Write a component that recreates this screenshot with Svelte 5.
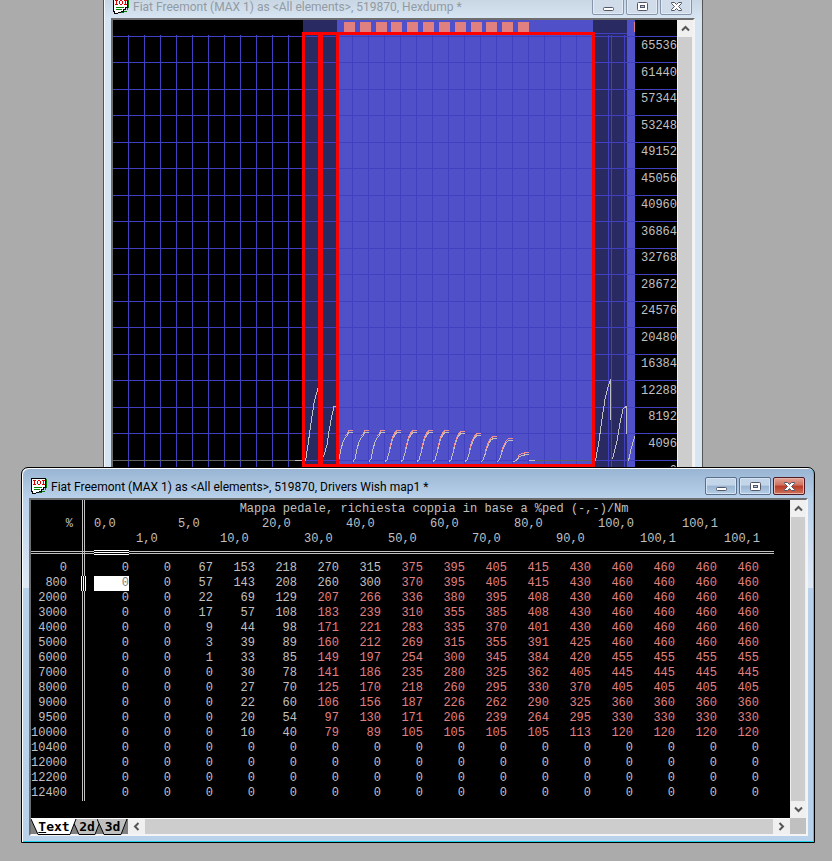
<script>
  const columns = ['0,0', '1,0', '5,0', '10,0', '20,0', '30,0', '40,0', '50,0', '60,0', '70,0', '80,0', '90,0', '100,0', '100,1', '100,1', '100,1'];

  const rows = [
    { rpm: 0, red: 7, v: [0, 0, 67, 153, 218, 270, 315, 375, 395, 405, 415, 430, 460, 460, 460, 460] },
    { rpm: 800, red: 7, v: [0, 0, 57, 143, 208, 260, 300, 370, 395, 405, 415, 430, 460, 460, 460, 460] },
    { rpm: 2000, red: 5, v: [0, 0, 22, 69, 129, 207, 266, 336, 380, 395, 408, 430, 460, 460, 460, 460] },
    { rpm: 3000, red: 5, v: [0, 0, 17, 57, 108, 183, 239, 310, 355, 385, 408, 430, 460, 460, 460, 460] },
    { rpm: 4000, red: 5, v: [0, 0, 9, 44, 98, 171, 221, 283, 335, 370, 401, 430, 460, 460, 460, 460] },
    { rpm: 5000, red: 5, v: [0, 0, 3, 39, 89, 160, 212, 269, 315, 355, 391, 425, 460, 460, 460, 460] },
    { rpm: 6000, red: 5, v: [0, 0, 1, 33, 85, 149, 197, 254, 300, 345, 384, 420, 455, 455, 455, 455] },
    { rpm: 7000, red: 5, v: [0, 0, 0, 30, 78, 141, 186, 235, 280, 325, 362, 405, 445, 445, 445, 445] },
    { rpm: 8000, red: 5, v: [0, 0, 0, 27, 70, 125, 170, 218, 260, 295, 330, 370, 405, 405, 405, 405] },
    { rpm: 9000, red: 5, v: [0, 0, 0, 22, 60, 106, 156, 187, 226, 262, 290, 325, 360, 360, 360, 360] },
    { rpm: 9500, red: 5, v: [0, 0, 0, 20, 54, 97, 130, 171, 206, 239, 264, 295, 330, 330, 330, 330] },
    { rpm: 10000, red: 5, v: [0, 0, 0, 10, 40, 79, 89, 105, 105, 105, 105, 113, 120, 120, 120, 120] },
    ...[10400, 12000, 12200, 12400].map((rpm) => ({ rpm, red: 99, v: Array(16).fill(0) }))
  ];

  const scale = Array.from({ length: 17 }, (_, i) => 65536 - i * 4096);
  const gridX = Array.from({ length: 32 }, (_, i) => 15 + i * 16);
  const gridY = Array.from({ length: 17 }, (_, i) => Math.floor(16 + i * 26.5));
  const marks = Array.from({ length: 12 }, (_, i) => Math.round(231 + i * 15.82));

  // One rising curve per table row; the value is the plateau height on the chart.
  const tops = [412, 412, 412, 412, 412, 412, 412, 413, 415, 418, 420, 434];
  const curves = tops.map((top, i) => {
    const x = 224 + i * 16;
    const h = 441 - top;
    const points =
      i === 11
        ? [[0, 0], [3, 0.1], [5, 0.45], [7, 0.75], [11, 0.85], [12, 1], [16, 1]]
        : i < 3
          ? [[0, 0], [2, 0.08], [4, 0.42], [6, 0.68], [8, 0.82], [10, 0.88], [12, 1], [16, 1]]
          : [[0, 0], [2, 0.06], [4, 0.3], [6, 0.58], [8, 0.8], [10, 0.93], [12, 1], [16, 1]];
    const line = (dy, from) =>
      points
        .slice(from)
        .map(([px, py]) => `${x + px},${441.5 - py * h + dy}`)
        .join(' ');
    return { light: line(0, i === 0 ? 1 : 0), red: line(-2, i < 3 ? 4 : 2) };
  });

  let tab = $state('Text');
</script>

{#snippet appIcon()}
  <svg class="app-icon" width="16" height="16" viewBox="0 0 16 16" shape-rendering="crispEdges" aria-hidden="true">
    <path d="M14 1h2v9h-1v2h-1v2h-3v1H2v-2h12z" fill="#008000" />
    <path d="M0 0h15v10h-2v2h-2v2H8v1H5v1H1v-2H0z" fill="#000" />
    <path d="M1 1h13v8h-2v2h-2v2H8v1H5v1H2v-2H1z" fill="#fff" />
    <path d="M2 2h3v1H4v3h1v1H2V6h1V3H2zM7 2h2v1H7zM6 3h1v3H6zM9 3h1v3H9zM7 6h2v1H7zM11 2h3v1h-1v3h1v1h-3V6h1V3h-1z" fill="#e00000" />
    <path d="M3 9h8v1H3zM3 11h6v1H3z" fill="#008000" />
  </svg>
{/snippet}

{#snippet titleBar(text)}
  <header class="title">
    {@render appIcon()}
    <h2>{text}</h2>
    <div class="caption-buttons">
      <button type="button" aria-label="Minimize">
        <svg width="13" height="11" viewBox="0 0 13 11"><rect x="1.5" y="6.5" width="10" height="3" rx="1" fill="#fff" stroke="#535666" /></svg>
      </button>
      <button type="button" aria-label="Maximize">
        <svg width="13" height="11" viewBox="0 0 13 11"><rect x="1.5" y="1.5" width="10" height="8" rx="1" fill="#fff" stroke="#535666" /><rect x="4.5" y="4.5" width="4" height="2" fill="#b8cde4" stroke="#535666" /></svg>
      </button>
      <button type="button" class="close" aria-label="Close">
        <svg width="13" height="11" viewBox="0 0 13 11"><path d="M1.5 1.5h3l2 2 2-2h3v1l-3 3 3 3v1h-3l-2-2-2 2h-3v-1l3-3-3-3z" fill="#fff" stroke="#535666" /></svg>
      </button>
    </div>
  </header>
{/snippet}

{#snippet arrow(dir)}
  <button type="button" class="arrow {dir}" aria-label="Scroll {dir}">
    <svg width="9" height="9" viewBox="0 0 9 9"><path d="M1 6.5L4.5 3L8 6.5" fill="none" stroke="#555" stroke-width="2" /></svg>
  </button>
{/snippet}

<main class="desktop">
  <section class="window back">
    {@render titleBar('Fiat Freemont (MAX 1) as <All elements>, 519870, Hexdump *')}
    <div class="client">
      <div class="hexdump">
        <svg class="plot" width="564" height="470" viewBox="0 0 564 470" shape-rendering="crispEdges" role="img" aria-label="Hexdump values">
          <rect x="190" width="34" height="470" fill="#2a2a62" />
          <rect x="224" width="256" height="470" fill="#5050c8" />
          <rect x="480" width="34" height="470" fill="#2a2a62" />
          <rect x="514" width="8" height="470" fill="#5050c8" />
          {#each marks as x}<rect {x} y="2" width="11" height="10" fill="#e08080" />{/each}
          <rect x="521" y="2" width="1" height="10" fill="#e08080" />
          <g fill="#4040c0">
            {#each gridX as x}<rect {x} y="15" width="1" height="455" />{/each}
            {#each gridY as y}<rect x="0" {y} width="564" height="1" />{/each}
            <rect x="480" y="13" width="34" height="1" />
            <rect x="498" y="15" width="1" height="455" />
            <rect x="511" y="15" width="1" height="455" />
          </g>
          <g fill="none" stroke="#c0c0c0">
            <path d="M0 440.5H182M421 440.5H480" stroke="#606060" />
            <path d="M182 440.5H190M416 440.5H422" />
            <path d="M192.500 441L195 425L198 403L201 383L203 375L205.500 367M210.500 437L214 425L216 411L219 395L221 386.500H224" />
            <path d="M482.500 441L486 421L489 399L492 379L495 367L497.500 359.500M497.500 359V400M499.500 439L504 421L507 403L510 389L513 386.500M513.500 386V414M515.500 441L518 429L522 416" />
            {#each curves as c}<polyline points={c.light} />{/each}
          </g>
          <g fill="none" stroke="#f09090">
            {#each curves as c}<polyline points={c.red} />{/each}
          </g>
          <g fill="none" stroke="#f00" stroke-width="3">
            <rect x="190.5" y="13.5" width="16" height="432" />
            <rect x="208.500" y="13.5" width="16" height="432" />
            <rect x="224.500" y="13.5" width="256" height="432" />
          </g>
        </svg>
        <ol class="scale">
          {#each scale as value}<li>{value}</li>{/each}
        </ol>
      </div>
      <div class="vbar">
        {@render arrow('up')}
        <div class="track"></div>
        {@render arrow('down')}
      </div>
    </div>
  </section>

  <section class="window front">
    {@render titleBar('Fiat Freemont (MAX 1) as <All elements>, 519870, Drivers Wish map1 *')}
    <div class="client">
      <div class="sheet">
        <table>
          <colgroup>
            <col class="col-rpm" />
            <col class="col-first" />
            <col span="14" class="col-value" />
            <col class="col-last" />
          </colgroup>
          <thead>
            <tr class="map-name"><th></th><th colspan="16">Mappa pedale, richiesta coppia in base a %ped (-,-)/Nm</th></tr>
            <tr>
              <th class="unit">%</th>
              {#each columns as c, i}<th scope="col">{i % 2 ? '' : c}</th>{/each}
            </tr>
            <tr>
              <th></th>
              {#each columns as c, i}<th scope="col">{i % 2 ? c : ''}</th>{/each}
            </tr>
            <tr class="rule"><th></th><td><i></i></td><td colspan="15"></td></tr>
          </thead>
          <tbody>
            {#each rows as row, r}
              <tr class:current={r === 1}>
                <th scope="row">{row.rpm}</th>
                {#each row.v as value, c}
                  <td class:red={c >= row.red}><span class:selected={r === 1 && c === 0}>{value}</span></td>
                {/each}
              </tr>
            {/each}
          </tbody>
        </table>
      </div>
      <div class="vbar">
        {@render arrow('up')}
        <div class="track"></div>
        {@render arrow('down')}
      </div>
      <div class="footer">
        <div class="tabs">
          {#each [['Text', 46], ['2d', 30], ['3d', 31]] as [name, w]}
            <button type="button" class:active={tab === name} style:width="{w}px" onclick={() => (tab = name)}>
              <svg width={w} height="16" aria-hidden="true"><path d="M0 0L7 15.500H{w - 7}L{w - 1} 0" /></svg>
              <b>{#if name === 'Text'}<u>T</u>ext{:else}{name}{/if}</b>
            </button>
          {/each}
        </div>
        <div class="hbar">
          {@render arrow('left')}
          <div class="track"></div>
          {@render arrow('right')}
        </div>
      </div>
      <div class="corner"></div>
    </div>
  </section>
</main>

<style>
  :global(body) {
    margin: 0;
    background: #ababab;
  }
  .desktop {
    position: relative;
    height: 100vh;
    min-height: 850px;
    overflow: hidden;
    background: #ababab;
    font-family: Roboto, 'Open Sans', sans-serif;
  }
  button {
    padding: 0;
    border: 0;
    font: inherit;
  }
  .window {
    position: absolute;
    box-sizing: border-box;
    display: flex;
    flex-direction: column;
    padding: 0 6px 6px 7px;
    border: 1px solid #555;
  }
  .back {
    left: 103px;
    top: -13px;
    width: 600px;
    padding-right: 7px;
    background: linear-gradient(#bfcddb, #d7e4f2 30px);
    box-shadow: inset 1px 0 #f4f8fc;
  }
  .front {
    left: 21px;
    top: 467px;
    width: 794px;
    border-color: #000;
    border-radius: 7px 7px 0 0;
    background:
      linear-gradient(#b9d1ea, #dfe9f6) 0 30px / 100% 90px no-repeat,
      linear-gradient(#98b4d2, #b9d1ea 30px);
    box-shadow: inset 1px 1px #fff, inset -1px -1px #22d3ee;
  }
  .title {
    display: flex;
    align-items: flex-start;
    height: 30px;
  }
  .app-icon {
    flex: none;
    margin: 10px 4px 0 2px;
  }
  h2 {
    flex: 1;
    margin: 12px 0 0;
    font-size: 12px;
    font-weight: 400;
    line-height: 14px;
    white-space: nowrap;
    color: #000;
  }
  .back h2 {
    color: #929aa2;
  }
  .caption-buttons {
    display: flex;
    gap: 2px;
    margin: 9px 3px 0 0;
  }
  .caption-buttons button {
    display: flex;
    align-items: center;
    justify-content: center;
    width: 32px;
    height: 18px;
    border: 1px solid #5a6f8c;
    border-radius: 2px;
    background: linear-gradient(#c3d5e8 45%, #9ab5d2 50%, #b5cde6);
    box-shadow: inset 0 0 0 1px #d5e3f2;
  }
  .back .caption-buttons button {
    border-color: #8795ac;
    background: #d0dcea;
    box-shadow: inset 0 0 0 1px #e2ebf5;
  }
  .front .caption-buttons .close {
    border-color: #4e1a24;
    background: linear-gradient(#e3a598, #cf6f5c 45%, #b83a25 50%, #d0715a);
    box-shadow: inset 0 0 0 1px #e8b3a8;
  }
  .client {
    display: grid;
    grid-template-columns: 1fr 16px;
    border: 2px solid;
    border-color: #6e6e6e #f4f4f4 #f4f4f4 #6e6e6e;
    background: #000;
  }
  .hexdump {
    position: relative;
    display: flex;
    font-family: 'Liberation Mono', monospace;
    font-size: 12px;
    color: #c0c0c0;
  }
  .plot {
    display: block;
  }
  .scale {
    position: absolute;
    top: 13px;
    right: 0;
    width: 42px;
    height: 451px;
    margin: 0;
    padding: 0;
    display: flex;
    flex-direction: column;
    list-style: none;
    text-align: right;
  }
  .scale li {
    flex: 1;
    line-height: 26px;
  }
  .vbar,
  .hbar {
    display: flex;
    background: #f0f0f0;
  }
  .vbar {
    flex-direction: column;
    padding: 0 1px;
  }
  .track {
    flex: 1;
    background: #cdcdcd;
  }
  .arrow {
    display: flex;
    align-items: center;
    justify-content: center;
    height: 17px;
    background: #f0f0f0;
  }
  .hbar {
    flex: 1;
    border-top: 1px solid #fff;
  }
  .hbar .arrow {
    width: 17px;
    height: 15px;
  }
  .down svg {
    transform: rotate(180deg);
  }
  .left svg {
    transform: rotate(-90deg);
  }
  .right svg {
    transform: rotate(90deg);
  }
  .sheet {
    padding-bottom: 17px;
    overflow: hidden;
    font-family: 'Liberation Mono', monospace;
    font-size: 12px;
    line-height: 15px;
    color: #c0c0c0;
  }
  table {
    width: 743px;
    table-layout: fixed;
    border-spacing: 0;
    white-space: nowrap;
  }
  .col-rpm {
    width: 54px;
  }
  .col-first {
    width: 51px;
  }
  .col-value {
    width: 42px;
  }
  .col-last {
    width: 50px;
  }
  tr {
    height: 15px;
  }
  th,
  td {
    padding: 0;
    font-weight: 400;
    text-align: left;
    box-sizing: border-box;
  }
  th:first-child {
    padding-right: 16px;
    border-right: 3px double #c0c0c0;
    text-align: right;
  }
  th.unit:first-child {
    padding-right: 9px;
  }
  th:nth-child(2),
  td:nth-child(2) {
    padding-left: 9px;
  }
  /* Five-digit row labels are right-aligned against the rule and may use the left margin. */
  tbody th:first-child {
    padding-right: 15px;
  }
  td span {
    display: block;
    width: 35px;
    text-align: right;
  }
  .map-name {
    height: 17px;
  }
  .map-name th[colspan] {
    padding: 2px 0 0 9px;
    text-align: center;
  }
  .rule {
    height: 14px;
    line-height: 14px;
    background: linear-gradient(#c0c0c0, #c0c0c0) 0 4px / 100% 1px no-repeat, linear-gradient(#c0c0c0, #c0c0c0) 0 6px / 100% 1px no-repeat;
  }
  .rule td {
    position: relative;
  }
  .rule i {
    position: absolute;
    left: 9px;
    top: 3px;
    width: 35px;
    height: 5px;
    background: repeating-linear-gradient(#fff 0 1px, #000 1px 2px);
  }
  .selected {
    background: #fff;
    color: #808080;
  }
  .current th {
    position: relative;
  }
  .current th::after {
    content: '';
    position: absolute;
    top: 0;
    right: -4px;
    width: 5px;
    height: 15px;
    background: repeating-linear-gradient(90deg, #fff 0 1px, #000 1px 2px);
  }
  .red {
    color: #e08080;
  }
  .footer {
    display: flex;
    height: 16px;
    background: #808080;
  }
  .tabs {
    display: flex;
    width: 97px;
    border-top: 1px solid #fff;
    box-sizing: border-box;
  }
  .tabs button {
    position: relative;
    flex: none;
    height: 15px;
    margin-right: -5px;
    background: none;
    font-family: 'DejaVu Sans Mono', monospace;
    font-size: 13px;
    line-height: 15px;
    color: #000;
  }
  .tabs svg {
    position: absolute;
    left: 0;
    top: 0;
    fill: #c0c0c0;
    stroke: #000;
  }
  .tabs .active {
    z-index: 1;
  }
  .tabs .active svg {
    fill: #fff;
  }
  .tabs b {
    position: relative;
    display: block;
  }
  .corner {
    background: #c0c0c0;
  }
</style>
